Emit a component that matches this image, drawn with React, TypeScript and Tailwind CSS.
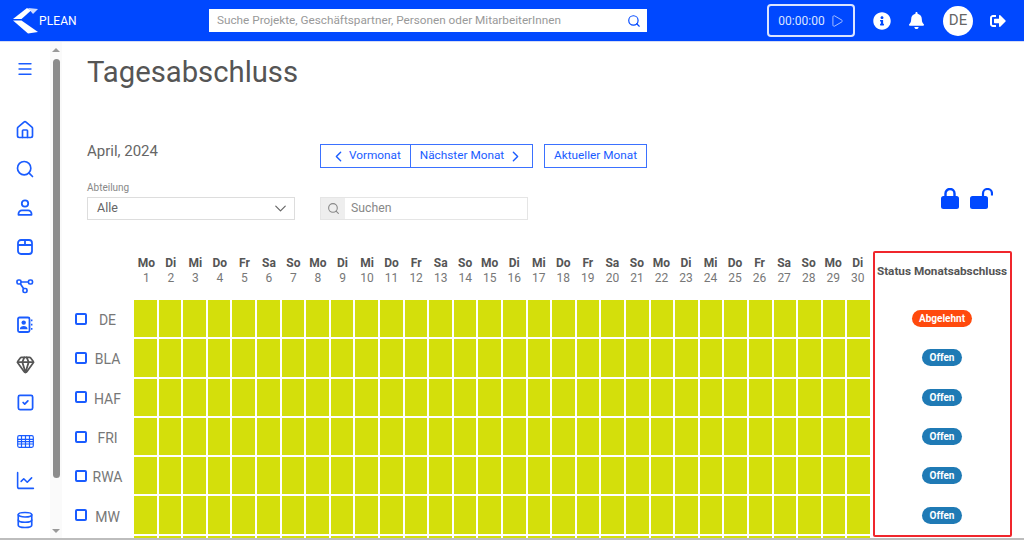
import React from 'react';
import { ChevronLeft, ChevronRight, ChevronDown, Search, Menu, House, Gem, SquareCheck, Database, ChartLine, Play } from 'lucide-react';
import { FaInfoCircle, FaBell, FaSignOutAlt } from 'react-icons/fa';

const days = ['Mo', 'Di', 'Mi', 'Do', 'Fr', 'Sa', 'So'];
const monthDays = Array.from({ length: 30 }, (_, i) => ({ name: days[i % 7], num: i + 1 }));
const rows = [
  { code: 'DE', status: 'Abgelehnt' },
  { code: 'BLA', status: 'Offen' },
  { code: 'HAF', status: 'Offen' },
  { code: 'FRI', status: 'Offen' },
  { code: 'RWA', status: 'Offen' },
  { code: 'MW', status: 'Offen' },
];

const Logo = () => (
  <svg width="26" height="27" viewBox="0 0 26 27" fill="white">
    <path d="M0 12 L14 1 L18 3.5 L8.5 12 Z" />
    <path d="M15 1 L25 2 L20 7 Z" opacity="0.8" />
    <path d="M0 13.5 L8.5 13.5 L25 25 L15 26.5 Z" />
  </svg>
);

const UserIcon = () => (
  <svg width="18" height="18" viewBox="0 0 18 18" fill="none" stroke="currentColor" strokeWidth="1.8">
    <circle cx="9" cy="4.5" r="3.2" />
    <path d="M2.5 15.8 v-1 a3.4 3.4 0 0 1 3.4-3.4 h6.2 a3.4 3.4 0 0 1 3.4 3.4 v1 Z" strokeLinejoin="round" />
  </svg>
);

const BoxIcon = () => (
  <svg width="18" height="18" viewBox="0 0 18 18" fill="none" stroke="currentColor" strokeWidth="1.8">
    <rect x="2" y="2" width="14" height="14" rx="3" />
    <path d="M2 7 H16 M9 2 V7" />
  </svg>
);

const NodesIcon = () => (
  <svg width="18" height="16" viewBox="0 0 18 16" fill="none" stroke="currentColor" strokeWidth="1.7">
    <rect x="1" y="2" width="4" height="4" rx="1.5" />
    <rect x="12.5" y="2" width="4" height="4" rx="1.5" />
    <rect x="7" y="10.5" width="4" height="4" rx="1.5" />
    <path d="M5 4 H12.5 M4.5 6 L7.5 10.5" />
  </svg>
);

const ContactIcon = () => (
  <svg width="18" height="18" viewBox="0 0 18 18" fill="none" stroke="currentColor" strokeWidth="1.8">
    <rect x="2" y="1.5" width="11.5" height="14.5" rx="1.5" />
    <circle cx="7.7" cy="6.6" r="2.2" fill="currentColor" stroke="none" />
    <path d="M3.8 13.2 c0-4.4 7.8-4.4 7.8 0 Z" fill="currentColor" stroke="none" />
    <path d="M15.7 3.5 v1.8 M15.7 7.8 v1.8 M15.7 12 v1.8" strokeWidth="1.5" />
  </svg>
);

const GridIcon = () => (
  <svg width="17" height="13" viewBox="0 0 17 13" fill="none" stroke="currentColor" strokeWidth="1.2">
    <rect x="0.7" y="0.7" width="15.6" height="11.6" rx="1.5" />
    <path d="M0.7 4.3 H16.3 M0.7 6.6 H16.3 M0.7 9 H16.3 M4.5 0.7 V12.3 M8.5 0.7 V12.3 M12.5 0.7 V12.3" />
  </svg>
);

const LockIcon = () => (
  <svg width="18" height="21" viewBox="0 0 18 21" fill="currentColor">
    <path d="M4.5 8 V5.5 a4.5 4.5 0 0 1 9 0 V8" fill="none" stroke="currentColor" strokeWidth="2.4" />
    <rect x="0" y="8" width="18" height="13" rx="2.5" />
  </svg>
);

const UnlockIcon = () => (
  <svg width="23" height="21" viewBox="0 0 23 21" fill="currentColor">
    <path d="M13 9 V5.5 a4.5 4.5 0 0 1 9 0 V7.5" fill="none" stroke="currentColor" strokeWidth="2.2" />
    <rect x="0" y="8" width="18" height="13" rx="2.5" />
  </svg>
);

const sideIcons = [
  { key: 'home', node: <House size={20} strokeWidth={2} /> },
  { key: 'search', node: <Search size={20} strokeWidth={2} /> },
  { key: 'user', node: <UserIcon /> },
  { key: 'box', node: <BoxIcon /> },
  { key: 'nodes', node: <NodesIcon /> },
  { key: 'contact', node: <ContactIcon /> },
  { key: 'gem', node: <Gem size={19} strokeWidth={2.2} className="mt-[2px] text-[#555]" /> },
  { key: 'check', node: <SquareCheck size={19} strokeWidth={2.2} /> },
  { key: 'grid', node: <GridIcon /> },
  { key: 'chart', node: <ChartLine size={21} strokeWidth={1.8} /> },
  { key: 'db', node: <Database size={18} strokeWidth={2.2} /> },
];

export default function App() {
  return (
    <div className="flex h-[540px] w-[1024px] flex-col overflow-hidden bg-white text-[#777] [font-family:Roboto,sans-serif]">
      <header className="flex h-[42px] shrink-0 items-center border-b border-[#d5dcf5] bg-[#0048ff] text-white">
        <div className="ml-[13px] flex w-[196px] items-center">
          <Logo />
          <span className="text-[12px] tracking-[0.1px]">PLEAN</span>
        </div>
        <div className="flex h-[23px] w-[438px] items-center justify-between bg-white pl-[8px] pr-[6px]">
          <span className="text-[11.75px] text-[#999]">Suche Projekte, Geschäftspartner, Personen oder MitarbeiterInnen</span>
          <Search size={14} className="text-[#0048ff]" />
        </div>
        <div className="ml-[120px] flex h-[33px] w-[88px] items-center justify-center gap-[5px] rounded-[4px] border-2 border-[#dbe4ff] text-[12px] text-[#dbe4ff]">
          00:00:00
          <Play size={14} strokeWidth={1.3} />
        </div>
        <FaInfoCircle size={18} className="ml-[18px]" />
        <FaBell size={17} className="ml-[17px]" />
        <div className="ml-[18px] flex h-[30px] w-[30px] items-center justify-center rounded-full bg-white text-[15px] text-[#666]">DE</div>
        <FaSignOutAlt size={16} className="ml-[17px]" />
      </header>

      <div className="flex min-h-0 flex-1 overflow-hidden">
        <nav className="flex w-[50px] shrink-0 flex-col items-center text-[#1a5cff]">
          <div className="flex h-[54px] shrink-0 items-center"><Menu size={18} strokeWidth={1.8} /></div>
          <div className="flex shrink-0 flex-col items-center pt-[14px]">
            {sideIcons.map(item => (
              <div key={item.key} className="flex h-[39px] shrink-0 items-center justify-center">{item.node}</div>
            ))}
          </div>
        </nav>

        <div className="flex w-[12px] shrink-0 flex-col items-center bg-[#fafafa] pt-[6px] pb-[5px]">
          <div className="h-0 w-0 border-x-[4px] border-b-[4px] border-x-transparent border-b-[#999]" />
          <div className="mt-[7px] h-[419px] w-[7px] rounded-full bg-[#8c8c8c]" />
          <div className="mt-auto h-0 w-0 border-x-[4px] border-t-[4px] border-x-transparent border-t-[#999]" />
        </div>

        <main className="min-w-0 flex-1 pl-[25px]">
          <h1 className="mt-[9px] text-[29.25px] leading-[42px] text-[#555]">Tagesabschluss</h1>

          <div className="mt-[49px] flex items-start">
            <div className="w-[233px] text-[15px] leading-[18px] text-[#666]">April, 2024</div>
            <div className="mt-[2px] flex h-[24px] border border-[#3b71ff] text-[11.8px] text-[#1a5cff]">
              <span className="flex w-[90px] items-center gap-[2px] border-r border-[#3b71ff] pl-[9px]">
                <ChevronLeft size={17} strokeWidth={2} />Vormonat
              </span>
              <span className="flex w-[121px] items-center justify-center gap-[3px] pl-[1px]">
                Nächster Monat<ChevronRight size={17} strokeWidth={2} />
              </span>
            </div>
            <div className="ml-[11px] mt-[2px] flex h-[24px] w-[103px] items-center justify-center border border-[#3b71ff] text-[11.8px] text-[#1a5cff]">Aktueller Monat</div>
          </div>

          <div className="mt-[16px] flex h-[37px] items-start">
            <div className="w-[233px]">
              <div className="-mt-[2px] text-[10px] leading-[12px] text-[#888]">Abteilung</div>
              <div className="mt-[3px] flex h-[23px] w-[208px] items-center justify-between border border-[#ddd] pl-[9px] pr-[4px] text-[12.5px] text-[#666]">
                Alle<ChevronDown size={19} strokeWidth={1.5} />
              </div>
            </div>
            <div className="mt-[13px] flex h-[23px] w-[208px] border border-[#e5e5e5]">
              <span className="flex w-[24px] items-center justify-center bg-[#eeeeee]"><Search size={13} className="text-[#888]" /></span>
              <span className="flex items-center pl-[6px] text-[12.25px] text-[#888]">Suchen</span>
            </div>
            <div className="ml-[413px] flex items-start gap-[11px] pt-[4px] text-[#0048ff]">
              <LockIcon />
              <UnlockIcon />
            </div>
          </div>

          <div className="mt-[30px] flex items-start">
            <div className="ml-[47px] w-[736px] pt-[5px]">
              <div className="grid h-[44px] grid-cols-[repeat(30,minmax(0,1fr))] text-center text-[12px] leading-[15px]">
                {monthDays.map(d => (
                  <div key={d.num}>
                    <div className="font-bold text-[#555]">{d.name}</div>
                    <div className="text-[#777]">{d.num}</div>
                  </div>
                ))}
              </div>
              <div className="relative grid grid-cols-[repeat(30,minmax(0,1fr))] gap-[2px]">
                {rows.concat(rows[0]).flatMap((r, ri) =>
                  monthDays.map(d => <div key={`${ri}-${d.num}`} className="h-[37.3px] bg-[#d4df0b]" />)
                )}
                <div className="absolute left-[-60px] top-0 flex w-[60px] flex-col">
                  {rows.map(r => (
                    <div key={r.code} className="flex h-[39.3px] items-center text-[14px]">
                      <span className="ml-[1px] mb-[2px] h-[12px] w-[12px] shrink-0 rounded-[2px] border-2 border-[#1a5cff]" />
                      <span className="w-[41px] pt-[2px] text-center">{r.code}</span>
                    </div>
                  ))}
                </div>
              </div>
            </div>
            <section className="ml-[3px] h-[286px] w-[139px] shrink-0 rounded-[2px] border-2 border-[#f0262c] pr-[1px]">
              <div className="flex h-[37px] items-center justify-center text-[11.75px] font-bold text-[#555] whitespace-nowrap">Status Monatsabschluss</div>
              <div className="mt-[9px] flex flex-col items-center">
                {rows.map(r => (
                  <div key={r.code} className="flex h-[39.3px] items-center">
                    <span className={`flex h-[17px] items-center justify-center rounded-full text-[10px] font-bold text-white ${r.status === 'Abgelehnt' ? 'w-[60px] bg-[#ff4a0d]' : 'w-[40px] bg-[#1f7ab5]'}`}>{r.status}</span>
                  </div>
                ))}
              </div>
            </section>
          </div>
        </main>
      </div>
      <div className="h-[2px] shrink-0 bg-[#bdbdbd]" />
    </div>
  );
}
